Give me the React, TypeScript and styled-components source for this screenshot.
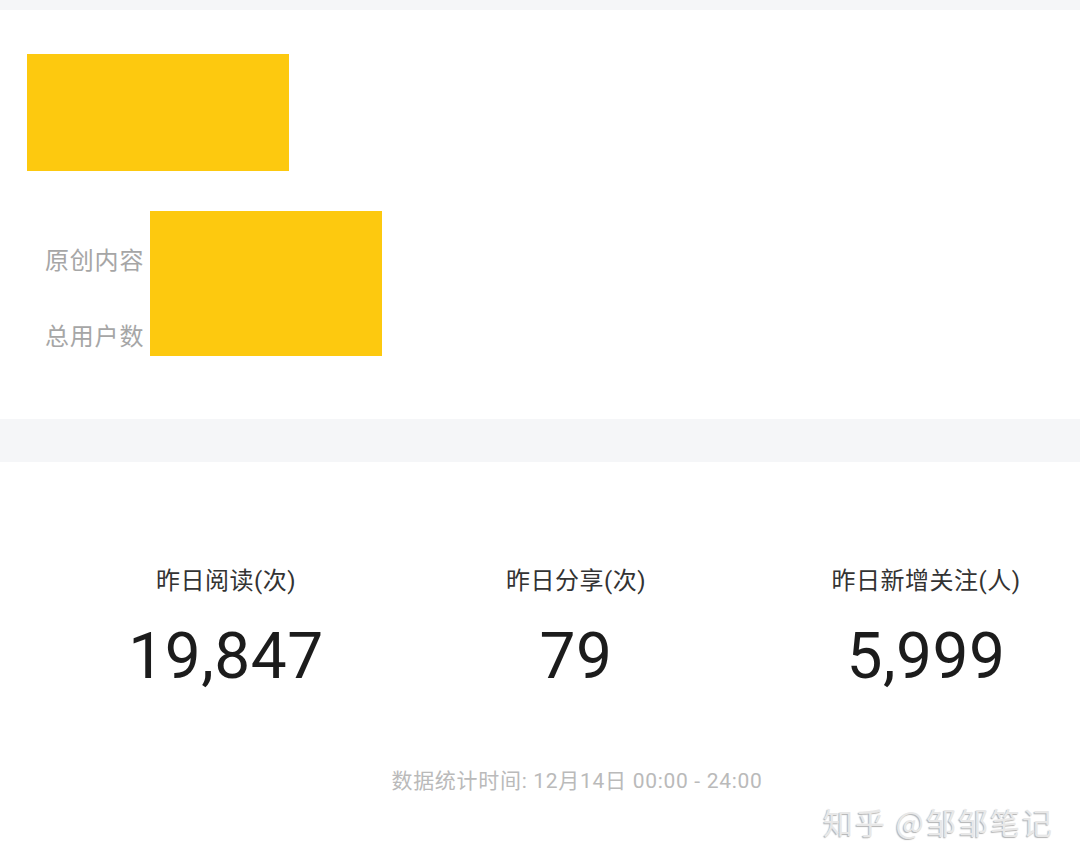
import React from "react";
import styled, { createGlobalStyle } from "styled-components";

const GlobalStyle = createGlobalStyle`
  html, body {
    margin: 0;
    padding: 0;
    background: #f5f6f8;
  }
  body {
    font-family: Roboto, "Noto Sans CJK SC", sans-serif;
  }
`;

const Page = styled.div`
  position: relative;
  width: 1080px;
  height: 866px;
  overflow: hidden;
  padding-top: 10px;
  box-sizing: border-box;
  background: #f5f6f8;
  display: flex;
  flex-direction: column;
  gap: 43px;
`;

const OverviewCard = styled.section`
  background: #ffffff;
  height: 409px;
  box-sizing: border-box;
  padding: 44px 0 0 27px;
  display: flex;
  flex-direction: column;
  gap: 40px;
`;

// redaction blocks over account info
const Redacted = styled.div<{ $w: number; $h: number }>`
  width: ${(p) => p.$w}px;
  height: ${(p) => p.$h}px;
  background: #fdc90f;
`;

const InfoRow = styled.div`
  display: flex;
`;

const InfoLabels = styled.div`
  width: 123px;
  box-sizing: border-box;
  padding: 32px 0 0 18px;
  display: flex;
  flex-direction: column;
  gap: 44px;
`;

const InfoLabel = styled.span`
  font-family: "Noto Sans CJK SC", sans-serif;
  font-size: 24px;
  line-height: 32px;
  letter-spacing: 0.8px;
  color: #a6a6a6;
  white-space: nowrap;
`;

const StatsCard = styled.section`
  flex: 1;
  background: #ffffff;
  padding-top: 103px;
  display: flex;
  flex-direction: column;
  align-items: flex-start;
`;

const StatsGrid = styled.div`
  display: grid;
  grid-template-columns: repeat(3, 350px);
  padding-left: 51px;
`;

const Stat = styled.div`
  display: flex;
  flex-direction: column;
  align-items: center;
  gap: 28px;
`;

const StatLabel = styled.span`
  font-size: 24px;
  line-height: 32px;
  letter-spacing: 0.5px;
  color: #333333;
  white-space: nowrap;
`;

const StatValue = styled.span`
  font-family: Roboto, sans-serif;
  font-size: 64px;
  line-height: 64px;
  letter-spacing: 0.5px;
  color: #1c1c1c;
`;

const Footnote = styled.div`
  width: 1080px;
  margin-top: 78px;
  padding-left: 74px;
  box-sizing: border-box;
  text-align: center;
  font-size: 21px;
  line-height: 28px;
  letter-spacing: 0.7px;
  color: #bababa;
`;

const Watermark = styled.div`
  position: absolute;
  right: 26px;
  bottom: 28px;
  font-family: "Noto Sans CJK SC", sans-serif;
  font-size: 30px;
  line-height: 34px;
  letter-spacing: 2px;
  color: #e8e8e8;
  text-shadow: -1px 1px 1px rgba(0, 0, 0, 0.3);
  white-space: nowrap;
`;

const stats = [
  { label: "昨日阅读(次)", value: "19,847" },
  { label: "昨日分享(次)", value: "79" },
  { label: "昨日新增关注(人)", value: "5,999" },
];

export default function App() {
  return (
    <>
      <GlobalStyle />
      <Page>
        <OverviewCard>
          <Redacted $w={262} $h={117} />
          <InfoRow>
            <InfoLabels>
              <InfoLabel>原创内容</InfoLabel>
              <InfoLabel>总用户数</InfoLabel>
            </InfoLabels>
            <Redacted $w={232} $h={145} />
          </InfoRow>
        </OverviewCard>
        <StatsCard>
          <StatsGrid>
            {stats.map((s) => (
              <Stat key={s.label}>
                <StatLabel>{s.label}</StatLabel>
                <StatValue>{s.value}</StatValue>
              </Stat>
            ))}
          </StatsGrid>
          <Footnote>数据统计时间: 12月14日 00:00 - 24:00</Footnote>
        </StatsCard>
        <Watermark>知乎 @邹邹笔记</Watermark>
      </Page>
    </>
  );
}
